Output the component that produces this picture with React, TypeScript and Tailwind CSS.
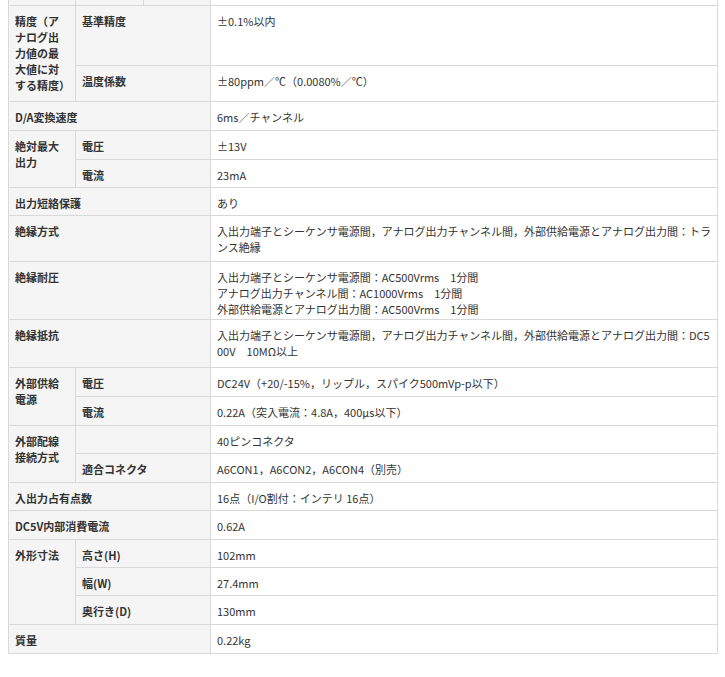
export default function App() {
  const L = "bg-[#f5f5f5] border border-[#d9d9d9] font-bold align-top px-[6px] pt-[7px]";
  const V = "bg-white border border-[#d9d9d9] align-top px-[6px] pt-[7px]";
  type R = { h: number; cells: { t: string; cls: string; cs?: number; rs?: number }[] };
  const l = (t: string, cs?: number, rs?: number) => ({ t, cls: L, cs, rs });
  const v = (t: string) => ({ t, cls: V });
  const rows: R[] = [
    { h: 60, cells: [l("精度（アナログ出力値の最大値に対する精度）", 1, 2), l("基準精度", 2), v("±0.1%以内")] },
    { h: 36, cells: [l("温度係数", 2), v("±80ppm／℃（0.0080%／℃）")] },
    { h: 29, cells: [l("D/A変換速度", 3), v("6ms／チャンネル")] },
    { h: 29, cells: [l("絶対最大出力", 1, 2), l("電圧", 2), v("±13V")] },
    { h: 28, cells: [l("電流", 2), v("23mA")] },
    { h: 28, cells: [l("出力短絡保護", 3), v("あり")] },
    { h: 46, cells: [l("絶縁方式", 3), v("入出力端子とシーケンサ電源間，アナログ出力チャンネル間，外部供給電源とアナログ出力間：トランス絶縁")] },
    { h: 58, cells: [l("絶縁耐圧", 3), v("入出力端子とシーケンサ電源間：AC500Vrms　1分間\nアナログ出力チャンネル間：AC1000Vrms　1分間\n外部供給電源とアナログ出力間：AC500Vrms　1分間")] },
    { h: 48, cells: [l("絶縁抵抗", 3), v("入出力端子とシーケンサ電源間，アナログ出力チャンネル間，外部供給電源とアナログ出力間：DC500V　10MΩ以上")] },
    { h: 29, cells: [l("外部供給電源", 1, 2), l("電圧", 2), v("DC24V（+20/-15%，リップル，スパイク500mVp-p以下）")] },
    { h: 29, cells: [l("電流", 2), v("0.22A（突入電流：4.8A，400μs以下）")] },
    { h: 28, cells: [l("外部配線接続方式", 1, 2), { t: "", cls: L + " border-b-0", cs: 2 }, v("40ピンコネクタ")] },
    { h: 29, cells: [l("適合コネクタ", 2), v("A6CON1，A6CON2，A6CON4（別売）")] },
    { h: 28, cells: [l("入出力占有点数", 3), v("16点（I/O割付：インテリ 16点）")] },
    { h: 29, cells: [l("DC5V内部消費電流", 3), v("0.62A")] },
    { h: 28, cells: [l("外形寸法", 1, 3), l("高さ(H)", 2), v("102mm")] },
    { h: 28, cells: [l("幅(W)", 2), v("27.4mm")] },
    { h: 29, cells: [l("奥行き(D)", 2), v("130mm")] },
    { h: 29, cells: [l("質量", 3), v("0.22kg")] },
  ];
  return (
    <div className="bg-white w-[725px] h-[677px] overflow-hidden" style={{ fontFamily: '"Noto Sans CJK JP", "Noto Sans", sans-serif' }}>
      <table className="ml-[8px] -mt-[1px] w-[710px] table-fixed border-collapse text-[11px] leading-[16px] text-[#333]">
        <colgroup>
          <col className="w-[67px]" />
          <col className="w-[68px]" />
          <col className="w-[67px]" />
          <col />
        </colgroup>
        <tbody>
          <tr className="h-[6px]">
            <td className="bg-[#f5f5f5] border border-[#d9d9d9] p-0" />
            <td className="bg-[#f5f5f5] border border-[#d9d9d9] p-0" />
            <td className="bg-[#f5f5f5] border border-[#d9d9d9] p-0" />
            <td className="bg-white border border-[#d9d9d9] p-0" />
          </tr>
          {rows.map((r, i) => (
            <tr key={i} style={{ height: r.h }}>
              {r.cells.map((c, j) => (
                <td key={j} colSpan={c.cs} rowSpan={c.rs} className={c.cls + " whitespace-pre-line break-all"}>
                  {c.t}
                </td>
              ))}
            </tr>
          ))}
        </tbody>
      </table>
    </div>
  );
}
